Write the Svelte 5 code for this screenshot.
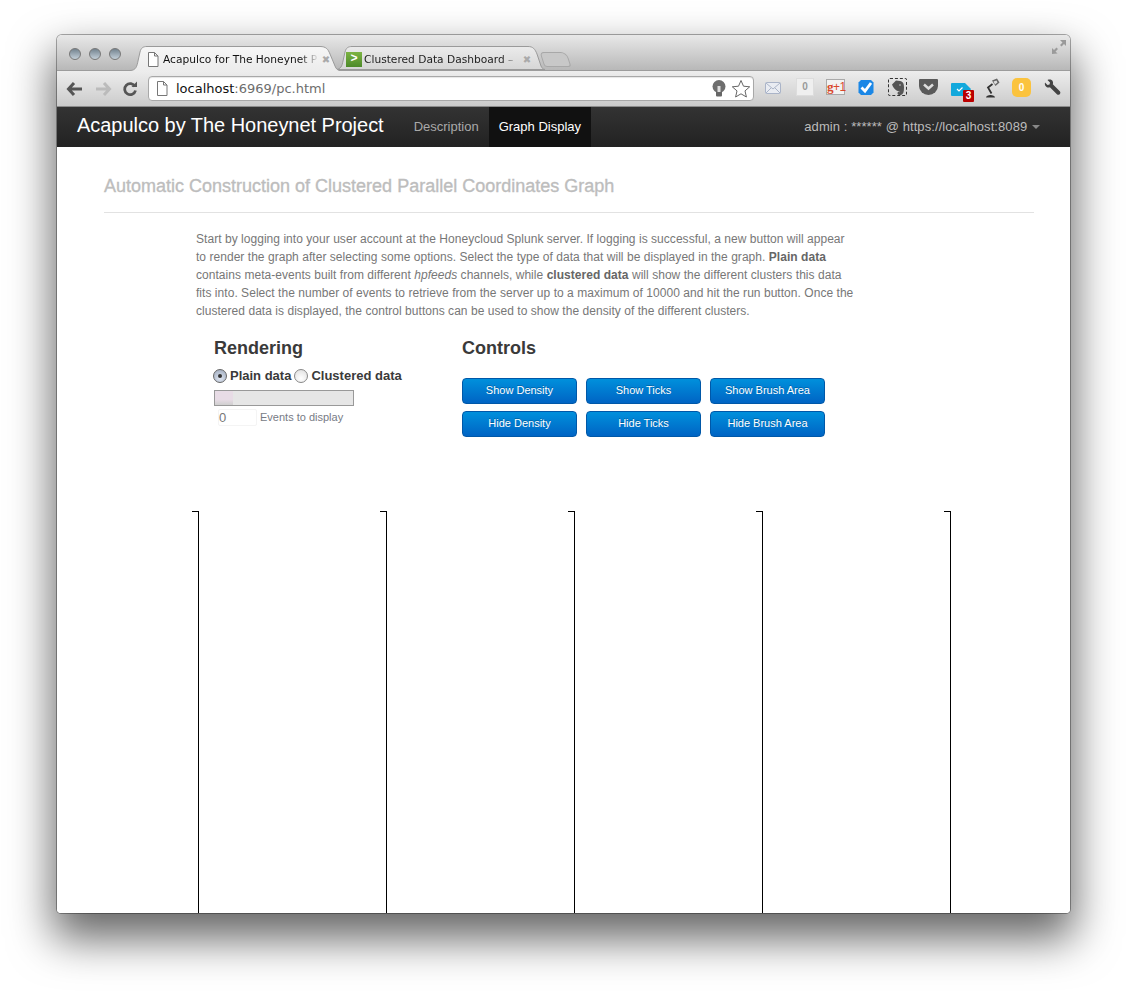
<script>
  const axes = [0, 1, 2, 3, 4];
  const showBtns = ['Show Density', 'Show Ticks', 'Show Brush Area'];
  const hideBtns = ['Hide Density', 'Hide Ticks', 'Hide Brush Area'];
</script>

<div class="stage">
  <div class="window">
    <div class="tabstrip">
      <div class="lights"><i></i><i></i><i></i></div>
      <div class="tabs">
        <div class="tab active">
          <svg class="tabshape" width="210" height="25" viewBox="0 0 210 25">
            <defs><linearGradient id="t1" x1="0" y1="0" x2="0" y2="1"><stop offset="0" stop-color="#f6f6f6"/><stop offset="1" stop-color="#ececec"/></linearGradient></defs>
            <path d="M0 24.500C6 24.500 7 20 8 15L10 6C11 2 13 .5 17 .5H190C196 .5 198 3 200 8L205 20C206 23 208 24.500 210 24.500V25H0z" fill="url(#t1)"/>
            <path d="M0 24.500C6 24.500 7 20 8 15L10 6C11 2 13 .5 17 .5H190C196 .5 198 3 200 8L205 20C206 23 208 24.500 210 24.500" fill="none" stroke="#9a9a9a"/>
          </svg>
          <svg class="pg" width="12" height="15" viewBox="0 0 12 15"><path d="M1.500.5h6l3.500 3.500v10.500h-9.500z M7.500.5v3.500h3.500" fill="#fff" stroke="#777"/></svg>
          <span class="tabtext">Acapulco for The Honeynet P</span>
          <span class="x">✖</span>
        </div>
        <div class="tab second">
          <svg class="tabshape" width="210" height="24" viewBox="0 0 210 24">
            <defs><linearGradient id="t2" x1="0" y1="0" x2="0" y2="1"><stop offset="0" stop-color="#ebebeb"/><stop offset="1" stop-color="#d6d6d6"/></linearGradient></defs>
            <path d="M0 23.500C6 23.500 7 20 8 15L10 6C11 2 13 .5 17 .5H193C198 .5 200 3 202 8L206 20C207 22 208 23.500 210 23.500z" fill="url(#t2)" stroke="#9a9a9a"/>
          </svg>
          <span class="fav">&gt;</span>
          <span class="tabtext">Clustered Data Dashboard –</span>
          <span class="x">✖</span>
        </div>
        <div class="newtab"></div>
      </div>
      <svg class="expand" width="16" height="16" viewBox="0 0 16 16"><path d="M9 1h6v6l-2-2-2.500 2.500-1.500-1.500 2.500-2.500zM1 15v-6l2 2 2.500-2.500 1.500 1.500-2.500 2.500 2 2z" fill="#9a9a9a"/></svg>
    </div>
    <div class="toolbar">
      <svg class="nav" width="18" height="16" viewBox="0 0 18 16"><path d="M8 2 2.500 8 8 14M3 8h13" fill="none" stroke="#555" stroke-width="3"/></svg>
      <svg class="nav" width="18" height="16" viewBox="0 0 18 16"><path d="M10 2l5.500 6-5.500 6M15 8H2" fill="none" stroke="#bbb" stroke-width="3"/></svg>
      <svg class="nav" width="16" height="16" viewBox="0 0 16 16"><path d="M13 5.500A5.500 5.500 0 1 0 13.500 9.500" fill="none" stroke="#555" stroke-width="2.800"/><path d="M9.500 6H15V.5z" fill="#555"/></svg>
      <div class="omnibox">
        <svg width="12" height="15" viewBox="0 0 12 15"><path d="M1.500.5h6l3.500 3.500v10.500h-9.500z M7.500.5v3.500h3.500" fill="#fff" stroke="#777"/></svg>
        <span class="url"><b>localhost</b>:6969/pc.html</span>
        <svg class="bulb" width="14" height="17" viewBox="0 0 14 17"><circle cx="7" cy="6.500" r="6.500" fill="#6e6e6e"/><rect x="4" y="11" width="6" height="5.500" rx="1" fill="#666"/><rect x="5.500" y="6" width="3" height="6" fill="#ddd"/></svg>
        <svg class="star" width="20" height="19" viewBox="0 0 20 19"><path d="M10 1.500l2.500 5.700 6.200.6-4.700 4.100 1.400 6.100-5.400-3.200-5.400 3.200 1.400-6.100-4.700-4.100 6.200-.6z" fill="#fff" stroke="#666"/></svg>
      </div>
      <div class="exts">
        <svg width="16" height="12" viewBox="0 0 16 12"><rect x=".5" y=".5" width="15" height="11" rx="1" fill="#e9ecf2" stroke="#aab4c8"/><path d="M1 1l7 6 7-6M1 11l5-5M15 11l-5-5" fill="none" stroke="#aab4c8"/></svg>
        <span class="zero-box">0</span>
        <span class="gplus"><em>g</em>+1</span>
        <svg width="16" height="17" viewBox="0 0 16 17"><path d="M3 1h10l2.500 2.500v10L13 16H3L.5 13.500v-10z" fill="#1b87e6"/><path d="M3.500 8.500l3.500 3.500 6-8" fill="none" stroke="#fff" stroke-width="2.800"/></svg>
        <span class="ever"><svg width="14" height="15" viewBox="0 0 14 15"><path d="M1 4.500 4.500 1 5 .5 9 1c3 .5 4 2.500 4 6.500s-.5 6.500-3 7.500c-2 .5-3.500-.5-3.500-2 0-1 1.500-1.300 2.500-.5 0-1.500-2-.8-3.500-2C4 9.500 2 7.500 1 4.500z" fill="#555"/><circle cx="9" cy="5" r=".8" fill="#ccc"/></svg></span>
        <svg width="19" height="16" viewBox="0 0 19 16"><path d="M1 0h17a1 1 0 0 1 1 1v6a9.500 9 0 0 1-19 0V1a1 1 0 0 1 1-1z" fill="#5a5a5a"/><path d="M5 5.500l4.500 4 4.500-4" fill="none" stroke="#ddd" stroke-width="2.500"/></svg>
        <span class="mailbadge">
          <svg width="20" height="13" viewBox="0 0 20 13"><path d="M1 0h13l6 6-4 7H1a1 1 0 0 1-1-1V1a1 1 0 0 1 1-1z" fill="#12a8dc"/><path d="M6 6l2 2 3.500-3.500" fill="none" stroke="#fff" stroke-width="1.200"/></svg>
          <b>3</b>
        </span>
        <svg width="16" height="20" viewBox="0 0 16 20"><path d="M8 2.500 13 .5l2.500 4-4 3.500z" fill="#666"/><path d="M9.500 3.500l3-1 1 2-2.500 2z" fill="#ddd"/><path d="M8.500 6 4 9.500l3.500 6" fill="none" stroke="#333" stroke-width="1.800"/><path d="M2 19.500c0-3.500 9-3.500 9 0z" fill="#333"/></svg>
        <span class="yellow">0</span>
        <svg width="17" height="17" viewBox="0 0 17 17"><path d="M1 3.500 3.500 6l2-.5L6 3.500 3.500 1C5.500 0 8 .5 8.800 2.500c.4 1 .4 2 0 2.800l7 7c.8.800.8 2-.1 2.900s-2 .8-2.800 0l-7-7C5 8.700 3.500 8.700 2.500 8 1 7 .5 5 1 3.500z" fill="#444"/></svg>
      </div>
    </div>

    <div class="page">
      <nav class="navbar">
        <span class="brand">Acapulco by The Honeynet Project</span>
        <span class="navlink">Description</span>
        <span class="navlink current">Graph Display</span>
        <span class="account">admin : ****** @ https://localhost:8089 <i class="caret"></i></span>
      </nav>

      <div class="content">
        <h1>Automatic Construction of Clustered Parallel Coordinates Graph</h1>
        <hr />
        <p class="intro">Start by logging into your user account at the Honeycloud Splunk server. If logging is successful, a new button will appear<br />to render the graph after selecting some options. Select the type of data that will be displayed in the graph. <b>Plain data</b><br />contains meta-events built from different <i>hpfeeds</i> channels, while <b>clustered data</b> will show the different clusters this data<br />fits into. Select the number of events to retrieve from the server up to a maximum of 10000 and hit the run button. Once the<br />clustered data is displayed, the control buttons can be used to show the density of the different clusters.</p>

        <div class="panels">
          <section class="rendering">
            <h2>Rendering</h2>
            <div class="radios">
              <span class="radio on"></span><b>Plain data</b>
              <span class="radio"></span><b>Clustered data</b>
            </div>
            <div class="slider"><span class="handle"></span></div>
            <div class="events"><span class="count">0</span><span class="evlabel">Events to display</span></div>
          </section>
          <section class="controls">
            <h2>Controls</h2>
            <div class="btns">
              {#each showBtns as b}<button>{b}</button>{/each}
              {#each hideBtns as b}<button class="hide">{b}</button>{/each}
            </div>
          </section>
        </div>
      </div>

      <div class="graph">
        {#each axes as a}
          <div class="axis"></div>
        {/each}
      </div>
    </div>
  </div>
</div>

<style>
  :global(body) { margin: 0; background: #fff; }
  .stage {
    width: 1127px; height: 992px; padding: 35px 57px 0; box-sizing: border-box; overflow: hidden;
    font-family: "Liberation Sans", Arial, sans-serif;
  }
  .window {
    width: 1013px; height: 878px; border-radius: 5px 5px 4px 4px; overflow: hidden; display: flex; flex-direction: column;
    box-shadow: 0 0 0 1px rgba(0,0,0,.32), 0 22px 44px 4px rgba(0,0,0,.6);
    background: #fff;
  }
  .tabstrip {
    height: 35px; flex: none; position: relative; z-index: 1; display: flex;
    background: linear-gradient(#e8e8e8, #b8b8b8);
  }
  .lights { display: flex; gap: 8px; padding: 13px 0 0 12px; }
  .lights i {
    width: 12px; height: 12px; border-radius: 50%; display: block; box-sizing: border-box;
    background: linear-gradient(#73838f, #c3cfd9); border: 1px solid #777;
  }
  .tabs { display: flex; margin-left: 9px; padding-top: 11px; align-items: flex-start; }
  .tab {
    width: 210px; box-sizing: border-box; display: flex; align-items: center; position: relative;
    font: 10.650px "DejaVu Sans", sans-serif; color: #111;
  }
  .tabshape { position: absolute; left: 0; top: 0; }
  .tab > :not(.tabshape) { position: relative; }
  .tab.active { height: 25px; padding: 1px 7px 0 17px; z-index: 2; }
  .tab.second { height: 24px; margin-left: -5px; padding: 3px 11px 0 11px; color: #222; }
  .tabtext { flex: 1; min-width: 0; white-space: nowrap; margin-left: 4px; -webkit-mask-image: linear-gradient(90deg, #000 88%, transparent 100%); mask-image: linear-gradient(90deg, #000 88%, transparent 100%); }
  .second .tabtext { margin-left: 2px; }
  .pg { flex: none; }
  .x { flex: none; font-size: 10px; color: #aaa; width: 14px; text-align: center; }
  .fav {
    flex: none; width: 16px; height: 15px; background: linear-gradient(#7cb342, #4d8a2a); color: #fff;
    font: bold 12px/15px "Liberation Mono", monospace; text-align: center;
  }
  .newtab { width: 27px; height: 15px; margin: 6px 0 0 -3px; border: 1px solid #a8a8a8; border-radius: 4px 6px 3px 3px; background: #c8c8c8; transform: skewX(18deg); box-sizing: border-box; }
  .expand { position: absolute; right: 3px; top: 4px; }

  .toolbar {
    height: 37px; flex: none; display: flex; align-items: center; box-sizing: border-box;
    background: linear-gradient(#ededed, #cbcbcb); border-top: 1px solid #9c9c9c; border-bottom: 1px solid #8c8c8c; padding-left: 9px;
  }
  .nav { flex: none; margin-right: 10px; }
  .omnibox {
    width: 606px; height: 25px; box-sizing: border-box; background: #fff; border: 1px solid #a8a8a8; border-radius: 4px;
    display: flex; align-items: center; padding-left: 7px; box-shadow: inset 0 1px 1px rgba(0,0,0,.1);
  }
  .url { flex: 1; margin-left: 8px; font: 13px "DejaVu Sans", sans-serif; color: #6d6d6d; }
  .url b { font-weight: 400; color: #111; }
  .bulb { margin-right: 5px; }
  .star { margin-right: 2px; }
  .exts { position: relative; align-self: stretch; flex: 1; }
  .exts > * { position: absolute; }
  .exts > :nth-child(1) { left: 11px; top: 11px; }
  .exts > :nth-child(2) { left: 42px; top: 7px; }
  .exts > :nth-child(3) { left: 72px; top: 8px; }
  .exts > :nth-child(4) { left: 104px; top: 8px; }
  .exts > :nth-child(5) { left: 134px; top: 7px; }
  .exts > :nth-child(6) { left: 165px; top: 8px; }
  .exts > :nth-child(7) { left: 197px; top: 11px; }
  .exts > :nth-child(8) { left: 230px; top: 7px; }
  .exts > :nth-child(9) { left: 258px; top: 7px; }
  .exts > :nth-child(10) { left: 290px; top: 8px; }
  .zero-box { width: 18px; height: 18px; background: #efefef; border: 1px solid #ddd; box-sizing: border-box; font: bold 10px/16px "Liberation Sans", sans-serif; color: #999; text-align: center; }
  .gplus { width: 19px; height: 16px; background: #f2f2f2; border: 1px solid #aaa; box-sizing: border-box; font: 12px/14px "Liberation Sans", sans-serif; color: #d9472b; text-align: center; white-space: nowrap; letter-spacing: -.5px; }
  .gplus em { font: 700 13px/14px "Liberation Serif", serif; }
  .ever { width: 19px; height: 18px; border: 1px dashed #333; box-sizing: border-box; border-radius: 2px; display: flex; align-items: center; justify-content: center; }
  .mailbadge { width: 20px; height: 13px; }
  .mailbadge b { position: absolute; left: 12px; top: 8px; width: 11px; height: 12px; background: #b00; color: #fff; font: bold 10px/12px "Liberation Sans", sans-serif; text-align: center; border-radius: 1px; }
  .yellow { width: 19px; height: 19px; border-radius: 5px; background: #fbc33e; color: #fff; font: bold 10px/19px "Liberation Sans", sans-serif; text-align: center; }

  .page { flex: 1; min-height: 0; display: flex; flex-direction: column; background: #fff; }
  .navbar {
    height: 40px; flex: none; display: flex; align-items: stretch; background: linear-gradient(#333, #222);
    line-height: 39px; padding-left: 20px; padding-right: 30px;
  }
  .brand { font-size: 20px; line-height: 36px; color: #fff; margin-right: 20px; letter-spacing: -.03px; }
  .navlink { font-size: 13px; color: #a9a9a9; padding: 0 10px; }
  .navlink.current { color: #fff; background: #111; }
  .account { margin-left: auto; font-size: 13px; color: #bcbcbc; letter-spacing: .08px; }
  .caret { display: inline-block; width: 0; height: 0; border: 4px solid transparent; border-top-color: #888; border-bottom: 0; vertical-align: 2px; margin-left: 1px; }

  .content { padding: 0 36px 0 47px; flex: none; height: 364px; box-sizing: border-box; }
  h1 { margin: 29px 0 0; font-size: 18px; line-height: 20px; font-weight: 400; color: #bdbdbd; -webkit-text-stroke: .35px #bdbdbd; }
  hr { margin: 16px 0 0; border: 0; border-top: 1px solid #e2e2e2; }
  .intro { margin: 17px 0 0 92px; font-size: 12px; line-height: 18px; color: #777; white-space: nowrap; letter-spacing: .04px; }
  .intro b { color: #666; }

  .panels { display: flex; margin: 18px 0 0 110px; }
  .rendering { width: 248px; }
  h2 { margin: 0; font-size: 18px; line-height: 20px; color: #3a3a3a; font-weight: 700; }
  .radios { display: flex; align-items: center; margin: 10px 0 0 -1px; font-size: 13px; line-height: 16px; color: #3a3a3a; height: 16px; white-space: nowrap; }
  .radios b { margin: 0 3px 0 3px; }
  .radio {
    width: 14px; height: 14px; border-radius: 50%; box-sizing: border-box; border: 1px solid #888; flex: none;
    background: radial-gradient(circle at 50% 70%, #fff, #ddd); position: relative;
  }
  .radio.on { background: radial-gradient(circle at 50% 70%, #dfe6f2, #9aa6ba); border-color: #666; }
  .radio.on::after { content: ""; position: absolute; left: 4px; top: 4px; width: 4px; height: 4px; border-radius: 50%; background: #333; }
  .slider { width: 140px; height: 16px; margin-top: 6px; box-sizing: border-box; border: 1px solid #999; background: #e6e6e6; }
  .handle { display: block; width: 18px; height: 14px; background: linear-gradient(#e8dce6 60%, #cfcfcf); }
  .events { display: flex; height: 22px; align-items: center; }
  .count { width: 39px; height: 17px; margin: 0 3px 0 4px; box-sizing: border-box; border: 1px solid #f4f4f4; border-radius: 2px; font-size: 13px; line-height: 15px; color: #777; }
  .evlabel { font-size: 11px; color: #777b85; }

  .btns { display: grid; grid-template-columns: repeat(3, 115px); gap: 7px 9px; margin-top: 20px; }
  button {
    height: 26px; padding: 0 0 2px; border: 1px solid #0058a8; border-radius: 4px; font-family: inherit; font-size: 11px; color: #fff;
    background: linear-gradient(#0090dc, #0064c4); text-shadow: 0 -1px 0 rgba(0,0,0,.25); box-sizing: border-box;
  }

  .graph { flex: 1; min-height: 0; display: flex; padding-left: 141px; }
  .axis { width: 188px; flex: none; height: 100%; position: relative; }
  .axis::before { content: ""; position: absolute; left: 0; top: 0; bottom: 0; width: 1px; background: #000; }
  .axis::after { content: ""; position: absolute; left: -6px; top: 0; width: 6px; height: 1px; background: #000; }
</style>
